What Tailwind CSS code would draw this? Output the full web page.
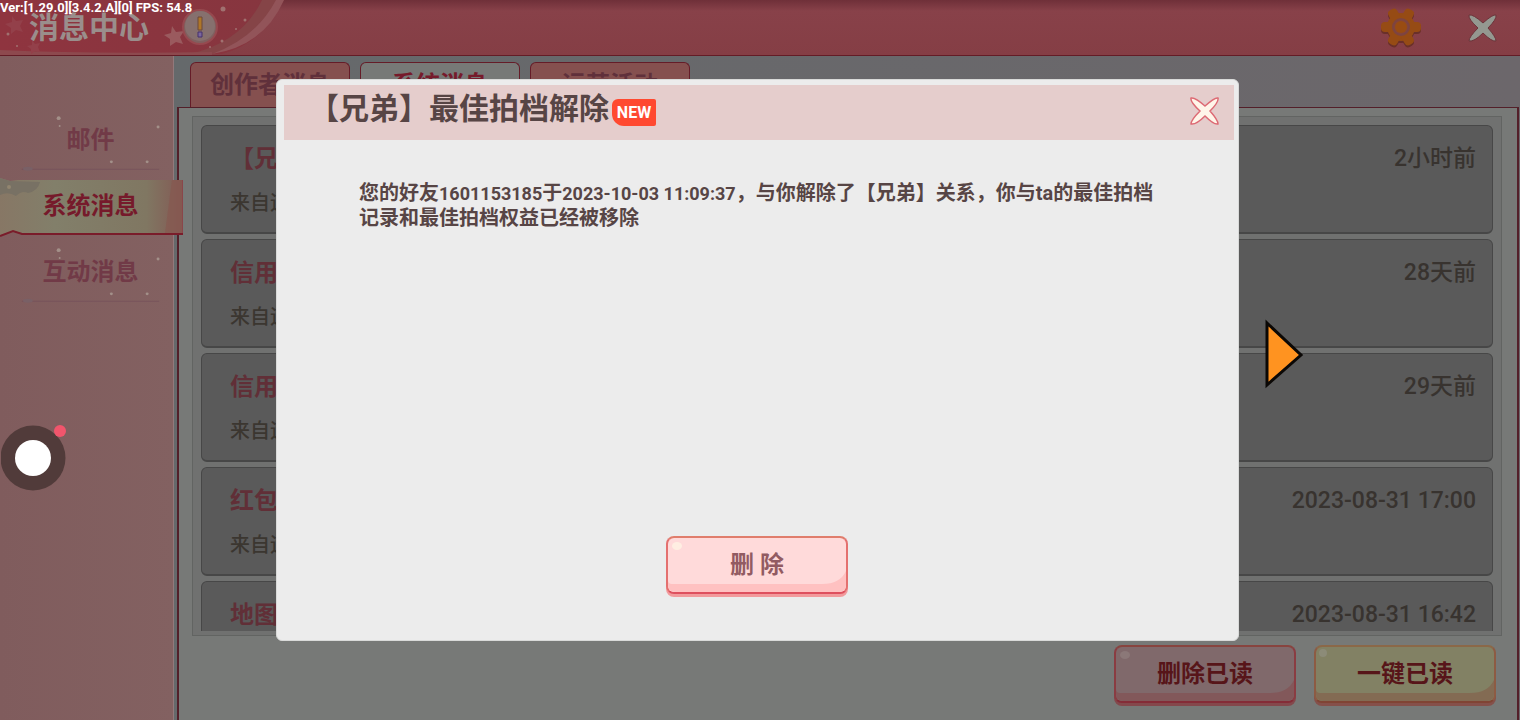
<!DOCTYPE html>
<html lang="zh-CN">
  <head>
    <meta charset="UTF-8" />
    <meta name="viewport" content="width=device-width, initial-scale=1.0" />
    <title>消息中心</title>
    <script src="https://cdn.jsdelivr.net/npm/@tailwindcss/browser@4"></script>
  </head>
  <body class="relative h-screen overflow-hidden flex flex-col bg-[#686667] font-['Roboto','Noto_Sans_CJK_SC',sans-serif] font-medium">
    <svg class="hidden">
      <symbol id="stars" viewBox="0 0 174 66">
        <g fill="#a39089">
          <circle cx="59" cy="11" r="2" />
          <circle cx="60" cy="19" r="1" />
          <circle cx="159" cy="20" r="1.5" />
          <circle cx="112" cy="55" r="1.5" />
          <circle cx="148" cy="55" r="1.5" />
        </g>
        <path d="M22 62.5H160" stroke="#75515a" opacity=".7" />
        <ellipse cx="28" cy="62" rx="5" ry="2" fill="#796066" />
      </symbol>
      <symbol id="gloss" viewBox="0 0 178 54">
        <path d="M178 33Q172 46 154 46H4Q0 46 0 42V47Q0 54 7 54H171Q178 54 178 47Z" fill="currentColor" />
      </symbol>
    </svg>

    <!-- title bar -->
    <header class="relative h-14 shrink-0 flex items-center justify-between pl-[29px] pr-[22px] bg-linear-to-b from-[#6f3039] via-[#884149] via-20% to-[#853e45] border-b border-[#641c26]">
      <svg class="absolute left-0 top-0 w-[300px] h-[55px]" viewBox="0 0 300 55">
        <defs>
          <linearGradient id="ribbon" x1="0" x2="1">
            <stop offset="0" stop-color="#8f343f" />
            <stop offset="1" stop-color="#86363f" />
          </linearGradient>
        </defs>
        <path d="M0 0H284Q262 44 222 54L0 55Z" fill="url(#ribbon)" />
        <path d="M262 0H278Q258 42 212 54H190Q242 42 262 0Z" fill="#854447" />
        <path d="M276 0H284Q264 46 212 54Q256 38 276 0Z" fill="#925459" />
        <path d="M0 50Q90 54 212 52V55H0Z" fill="#8d494e" />
        <path d="M172 26l4 6 8-1-4 6 3 7-7-2-6 4v-7l-6-4 7-2z" fill="#9a5a5e" />
        <path d="M12 16l4 5 7-1-3 6 3 6-7-2-5 4v-6l-6-4 7-2z" fill="#93404a" />
        <path d="M32 40l3 4 5-1-2 4 2 5-5-1-4 3v-5l-4-3 5-1z" fill="#93404a" />
        <g fill="#a07170">
          <circle cx="223" cy="9" r="2.5" />
          <circle cx="245" cy="20" r="1.5" />
          <circle cx="236" cy="29" r="1" />
          <circle cx="222" cy="41" r="1.5" />
          <circle cx="210" cy="47" r="1" />
          <circle cx="8" cy="34" r="1.5" />
          <circle cx="17" cy="46" r="1" />
        </g>
      </svg>
      <div class="relative flex items-center gap-[31px]">
        <h1 class="text-[30px] leading-8 font-bold text-[#9a8e8c]">消息中心</h1>
        <button type="button" aria-label="说明">
          <svg class="w-10 h-10" viewBox="0 0 40 40">
            <circle cx="20" cy="19" r="17" fill="#80605f" stroke="#96494f" stroke-width="2" />
            <circle cx="20" cy="18" r="15" fill="#86706e" />
            <path d="M18 9h4v13h-4z" fill="#ae7628" stroke="#6c483a" />
            <path d="M18 24h4v5h-4z" fill="#7b669e" stroke="#44306c" />
          </svg>
        </button>
      </div>
      <div class="relative flex items-center gap-[46px]">
        <button type="button" aria-label="设置">
          <svg class="w-[42px] h-[42px]" viewBox="0 0 42 42">
            <defs>
              <g id="cog">
                <circle cx="21" cy="20" r="14" />
                <rect x="1" y="15" width="40" height="10" rx="4" />
                <rect x="1" y="15" width="40" height="10" rx="4" transform="rotate(60 21 20)" />
                <rect x="1" y="15" width="40" height="10" rx="4" transform="rotate(120 21 20)" />
              </g>
            </defs>
            <use href="#cog" y="2" fill="#6a3029" />
            <use href="#cog" fill="#964b14" />
            <circle cx="21" cy="20" r="8" fill="#84453c" stroke="#7d4440" stroke-width="2" />
            <circle cx="21" cy="20" r="6" fill="#994c12" />
          </svg>
        </button>
        <button type="button" aria-label="关闭">
          <svg class="w-[30px] h-[30px]" viewBox="0 0 30 30">
            <path d="M1 2Q5 1 15 10Q25 1 28 2Q29 6 20 15Q28 24 28 28Q24 29 15 20Q6 29 1 28Q1 24 10 15Q0 6 1 2Z" fill="#949890" stroke="#6c353b" />
          </svg>
        </button>
      </div>
    </header>

    <div class="flex-1 min-h-0 flex">
      <!-- side menu -->
      <nav class="w-[174px] shrink-0 pt-[51px] border-r border-[#92797b] bg-linear-to-r from-[#805c5d] to-[#836161] text-2xl text-center font-bold text-[#713a47]">
        <a href="#mail" class="relative h-[66px] pl-2 flex items-center justify-center">
          <svg class="absolute inset-0 w-full h-full"><use href="#stars" /></svg>
          <span class="relative">邮件</span>
        </a>
        <a href="#system" class="relative h-[66px] pl-2 flex items-center justify-center text-[#761a2b]">
          <svg class="absolute left-0 top-1 w-[184px] h-[62px]" viewBox="0 0 184 62">
            <defs>
              <linearGradient id="banner" x1="0" x2="1">
                <stop offset="0" stop-color="#877765" />
                <stop offset=".3" stop-color="#827f6a" />
                <stop offset=".8" stop-color="#807762" />
                <stop offset="1" stop-color="#835954" />
              </linearGradient>
            </defs>
            <path d="M0 1L10 4L18 3H183V56H22L13 54L0 58Z" fill="url(#banner)" />
            <path d="M0 1L10 4L40 5Q38 14 28 16Q22 13 16 19Q8 14 0 18Z" fill="#787164" />
            <path d="M172 3H183V56H165Z" fill="#87564f" opacity=".6" />
            <path d="M182.500 3V58" stroke="#8a464a" />
            <path d="M0 59L13 54L22 57H183" fill="none" stroke="#7a1c2a" stroke-width="2" />
            <circle cx="9" cy="10" r="2" fill="#92856f" />
          </svg>
          <span class="relative">系统消息</span>
        </a>
        <a href="#interact" class="relative h-[66px] pl-2 flex items-center justify-center">
          <svg class="absolute inset-0 w-full h-full"><use href="#stars" /></svg>
          <span class="relative">互动消息</span>
        </a>
      </nav>

      <main class="flex-1 min-w-0 flex flex-col pt-1.5 pl-[3px] pr-px bg-linear-to-r from-[#65696b] to-[#6c676b]">
        <div class="flex gap-2.5 pl-[13px] text-2xl font-bold text-[#60303b]">
          <button type="button" class="w-40 h-[45px] rounded-t-md border border-b-0 border-[#651c28] bg-[#85504f]">创作者消息</button>
          <button type="button" class="w-40 h-[45px] rounded-t-md border border-b-0 border-[#651c28] bg-[#777977] text-[#761a2b]">系统消息</button>
          <button type="button" class="w-40 h-[45px] rounded-t-md border border-b-0 border-[#651c28] bg-[#85504f]">运营活动</button>
        </div>

        <section class="flex-1 min-h-0 flex flex-col pl-[13px] pr-[15px] pt-2 pb-[14px] border-x-2 border-t border-[#531f29] bg-[#777977]">
          <div class="flex-1 min-h-0 px-2 pt-2 pb-1 border border-[#626462] bg-[#707170]">
            <ul class="h-full overflow-hidden flex flex-col gap-[5px] text-2xl text-[#612f37]">
              <li class="h-[109px] shrink-0 pl-7 pr-4 pt-[17px] rounded-md border border-b-2 border-[#474747] bg-[#5a5a5a]">
                <div class="flex justify-between"><h2 class="font-bold">【兄弟】最佳拍档解除</h2><time class="text-[23px] leading-8 text-[#38332f]">2小时前</time></div>
                <p class="mt-3.5 text-xl text-[#3b3630]">来自运</p>
              </li>
              <li class="h-[109px] shrink-0 pl-7 pr-4 pt-[17px] rounded-md border border-b-2 border-[#474747] bg-[#5a5a5a]">
                <div class="flex justify-between"><h2 class="font-bold">信用</h2><time class="text-[23px] leading-8 text-[#38332f]">28天前</time></div>
                <p class="mt-3.5 text-xl text-[#3b3630]">来自运</p>
              </li>
              <li class="h-[109px] shrink-0 pl-7 pr-4 pt-[17px] rounded-md border border-b-2 border-[#474747] bg-[#5a5a5a]">
                <div class="flex justify-between"><h2 class="font-bold">信用</h2><time class="text-[23px] leading-8 text-[#38332f]">29天前</time></div>
                <p class="mt-3.5 text-xl text-[#3b3630]">来自运</p>
              </li>
              <li class="h-[109px] shrink-0 pl-7 pr-4 pt-[17px] rounded-md border border-b-2 border-[#474747] bg-[#5a5a5a]">
                <div class="flex justify-between"><h2 class="font-bold">红包</h2><time class="text-[23px] leading-8 text-[#38332f]">2023-08-31 17:00</time></div>
                <p class="mt-3.5 text-xl text-[#3b3630]">来自运</p>
              </li>
              <li class="h-[109px] shrink-0 pl-7 pr-4 pt-[17px] rounded-md border border-b-2 border-[#474747] bg-[#5a5a5a]">
                <div class="flex justify-between"><h2 class="font-bold">地图</h2><time class="text-[23px] leading-8 text-[#38332f]">2023-08-31 16:42</time></div>
              </li>
            </ul>
          </div>

          <div class="mt-[9px] mr-1.5 flex justify-end gap-[18px] text-2xl font-bold text-[#571519]">
            <button type="button" class="relative w-[182px] h-[58px] mb-[3px] rounded-lg border-2 border-t-[#88443f] border-x-[#8a3c42] border-b-[#842c37] bg-[#80696b] shadow-[0_3px_0_#84484c]">
              <svg class="absolute inset-0 w-full h-full text-[#82585a]"><use href="#gloss" /><ellipse cx="9" cy="8" rx="5" ry="4" fill="#8b7878" /></svg>
              <span class="relative">删除已读</span>
            </button>
            <button type="button" class="relative w-[182px] h-[58px] mb-[3px] rounded-lg border-2 border-t-[#8b6848] border-x-[#8d5b43] border-b-[#804434] bg-[#828164] shadow-[0_3px_0_#85504a]">
              <svg class="absolute inset-0 w-full h-full text-[#836b53]"><use href="#gloss" /><ellipse cx="7" cy="6" rx="4" ry="4" fill="#8c8b78" /></svg>
              <span class="relative">一键已读</span>
            </button>
          </div>
        </section>
      </main>
    </div>

    <!-- message detail -->
    <div class="absolute inset-0 flex items-center justify-center pr-[5px]">
      <div role="dialog" aria-labelledby="detailTitle" class="w-[963px] max-w-full min-h-[562px] flex flex-col pl-[7px] pr-1 pt-[5px] rounded-md border border-[#d9dad9] bg-[#ececec] text-[#574545]">
        <div class="h-[55px] flex items-center justify-between pl-[25px] pr-3.5 bg-[#e5cdcc]">
          <div class="flex items-center gap-[3px] pb-2">
            <h2 id="detailTitle" class="text-[30px] leading-9 font-bold">【兄弟】最佳拍档解除</h2>
            <span class="mt-2 w-11 h-[27px] rounded-tl-md rounded-tr-xs rounded-br-xs rounded-bl-xl bg-[#ff4930] text-base leading-7 text-center font-bold text-white">NEW</span>
          </div>
          <button type="button" aria-label="关闭详情" class="pb-1">
            <svg class="w-[30px] h-[30px]" viewBox="0 0 30 30">
              <path d="M1 2Q5 1 15 10Q25 1 28 2Q29 6 20 15Q28 24 28 28Q24 29 15 20Q6 29 1 28Q1 24 10 15Q0 6 1 2Z" fill="#fff5e9" stroke="#dd6a74" stroke-width="1.500" />
            </svg>
          </button>
        </div>
        <p class="flex-1 pl-[75px] pr-[72px] pt-[41px] text-xl leading-6 font-bold">您的好友<span class="text-lg leading-6">1601153185</span>于<span class="text-lg leading-6">2023-10-03 11:09:37</span>，与你解除了【兄弟】关系，你与ta的最佳拍档记录和最佳拍档权益已经被移除</p>
        <div class="flex justify-center pr-1 pb-[46px]">
          <button type="button" class="relative w-[182px] h-[58px] rounded-lg border-2 border-t-[#e07d6c] border-x-[#e4706f] border-b-[#de505e] bg-[#ffdada] shadow-[0_3px_0_#f29a9c] text-2xl font-bold text-[#925b62]">
            <svg class="absolute inset-0 w-full h-full text-[#ffc1c1]"><use href="#gloss" /><ellipse cx="9" cy="8" rx="5" ry="4" fill="#ffeee2" /></svg>
            <span class="relative">删 除</span>
          </button>
        </div>
      </div>
    </div>

    <svg class="absolute right-[216px] top-[316px] w-10 h-[74px]" viewBox="0 0 40 74">
      <path d="M3 7L37 39L3 69Z" fill="#ff9320" stroke="#0b0806" stroke-width="3" />
    </svg>

    <button type="button" aria-label="悬浮菜单" class="absolute left-px top-[425px]">
      <svg class="w-[66px] h-[66px]" viewBox="0 0 66 66">
        <circle cx="32" cy="33" r="32.500" fill="#513b3a" />
        <circle cx="32" cy="33" r="18" fill="#fff" />
        <circle cx="59" cy="6" r="6" fill="#f1556c" />
      </svg>
    </button>

    <p class="absolute left-0 top-0 text-[13px] leading-4 font-bold text-white">Ver:[1.29.0][3.4.2.A][0] FPS: 54.8</p>
  </body>
</html>
